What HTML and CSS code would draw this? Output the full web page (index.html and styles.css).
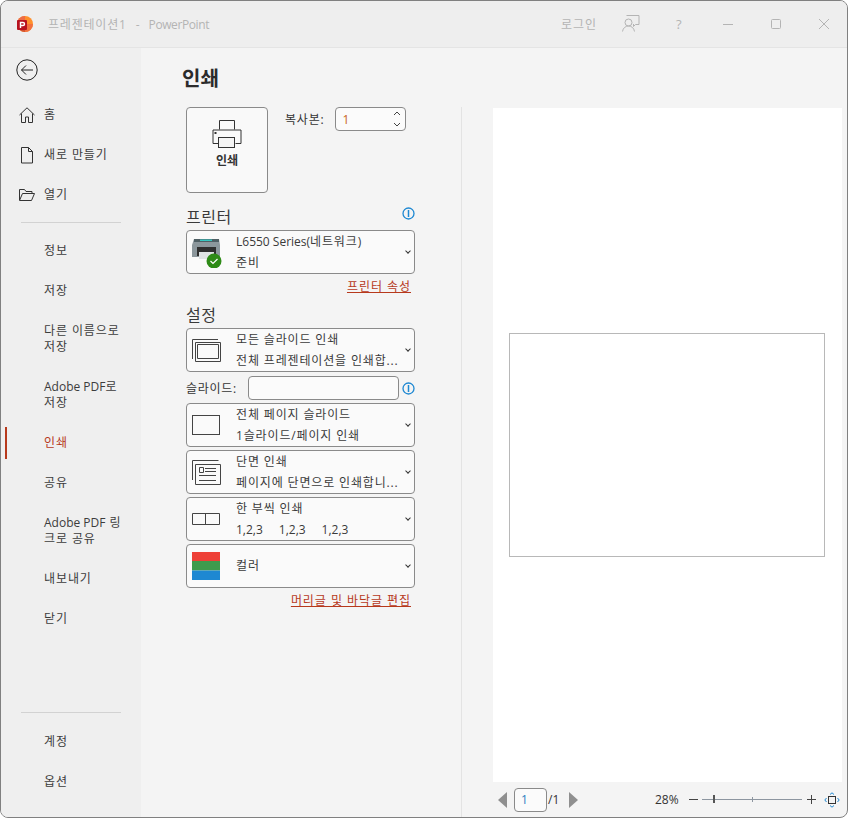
FILE: index.html
```html
<!DOCTYPE html>
<html lang="ko">
<head>
<meta charset="utf-8">
<title>인쇄 - PowerPoint</title>
<link rel="stylesheet" href="styles.css">
</head>
<body>
<div class="window">
  <header class="titlebar">
    <svg class="logo" width="18" height="18" viewBox="0 0 18 18"><circle cx="9" cy="9" r="8" fill="#ff8f2b"/><path d="M9 1a8 8 0 0 0-8 8h8z" fill="#ed6c47"/><path d="M1 9a8 8 0 0 0 8 8V9z" fill="#d35230"/><path d="M9 9h8a8 8 0 0 1-8 8z" fill="#f2703f"/><rect x="1" y="5" width="10" height="10" rx="1" fill="#b7121f"/><path d="M4.500 13V7.500H7a1.500 1.500 0 0 1 0 3H4.500" fill="none" stroke="#fff" stroke-width="1.400"/></svg>
    <span class="doc-title">프레젠테이션1</span><span class="doc-sep">-</span><span class="doc-app">PowerPoint</span>
    <span class="title-spacer"></span>
    <span class="login">로그인</span>
    <svg class="coauth" width="18" height="18" viewBox="0 0 18 18" fill="none" stroke="#b4b4b4"><path d="M4.500 0.500H17V9.500H13.500L11.500 11.500V9"/><circle cx="6.500" cy="7.500" r="3.500" fill="#eeeeee"/><path d="M0.500 16.500C1 13 3.500 11 6.500 11S12 13 12.500 16.500"/></svg>
    <span class="help">?</span>
    <svg class="win-btn" width="46" height="12" viewBox="0 0 46 12" fill="none" stroke="#b4b4b4"><path d="M18 6.500H28"/></svg>
    <svg class="win-btn" width="46" height="12" viewBox="0 0 46 12" fill="none" stroke="#b4b4b4"><rect x="18.500" y="1.500" width="9" height="9" rx="1"/></svg>
    <svg class="win-btn" width="46" height="12" viewBox="0 0 46 12" fill="none" stroke="#b4b4b4"><path d="M18 1L28 11M28 1L18 11"/></svg>
  </header>
  <div class="content">
    <nav class="sidebar">
      <svg class="back" width="22" height="22" viewBox="0 0 22 22" fill="none" stroke="#222"><circle cx="11" cy="11" r="10.200"/><path d="M17 11H5.500M10 6.500L5.500 11L10 15.500"/></svg>
      <ul class="nav-list">
        <li class="nav-item"><svg class="nav-icon" width="16" height="16" viewBox="0 0 16 16" fill="none" stroke="#333"><path d="M0.500 8L8 0.800L15.500 8M2.500 6.500V15.500H6.500V10H9.500V15.500H13.500V6.500"/></svg>홈</li>
        <li class="nav-item"><svg class="nav-icon" width="16" height="17" viewBox="0 0 16 17" fill="none" stroke="#333"><path d="M2.500 0.500H9.500L13.500 4.500V16H2.500ZM9.500 0.500V4.500H13.500"/></svg>새로 만들기</li>
        <li class="nav-item"><svg class="nav-icon" width="16" height="12" viewBox="0 0 16 12" fill="none" stroke="#333"><path d="M0.500 11V0.500H5.500L7 2.500H13V4.500M0.500 11.500H12.500L15.500 4.500H3.500L0.500 11.500"/></svg>열기</li>
      </ul>
      <hr class="nav-rule">
      <ul class="nav-list">
        <li class="nav-item nav-sub">정보</li>
        <li class="nav-item nav-sub">저장</li>
        <li class="nav-item nav-sub nav-tall">다른 이름으로<br>저장</li>
        <li class="nav-item nav-sub nav-tall"><span class="latin">Adobe PDF</span>로<br>저장</li>
        <li class="nav-item nav-sub nav-active">인쇄</li>
        <li class="nav-item nav-sub">공유</li>
        <li class="nav-item nav-sub nav-tall"><span class="latin">Adobe PDF</span> 링<br>크로 공유</li>
        <li class="nav-item nav-sub">내보내기</li>
        <li class="nav-item nav-sub">닫기</li>
      </ul>
      <div class="nav-bottom">
        <hr class="nav-rule">
        <ul class="nav-list">
          <li class="nav-item nav-sub">계정</li>
          <li class="nav-item nav-sub">옵션</li>
        </ul>
      </div>
    </nav>
    <main class="main">
      <h1 class="page-title">인쇄</h1>
      <div class="columns">
        <section class="options">
          <div class="print-row">
            <button class="print-btn">
              <svg width="30" height="28" viewBox="0 0 30 28" fill="none" stroke="#333"><path d="M7.500 9.500V0.500H22.500V9.500"/><path d="M6.500 23.500H1V10H29V23.500H23.500"/><rect x="6.500" y="17.500" width="16" height="10" fill="#f4f4f4"/><rect x="2.500" y="12" width="2" height="2" fill="#333" stroke="none"/></svg>
              <span>인쇄</span>
            </button>
            <label class="copies-label">복사본:</label>
            <div class="spin"><span class="spin-val">1</span>
              <svg width="8" height="20" viewBox="0 0 8 20" fill="none" stroke="#444"><path d="M1 6L4 3L7 6M1 14L4 17L7 14"/></svg>
            </div>
          </div>
          <div class="head-row head-printer">
            <h2 class="section">프린터</h2>
            <svg class="info" width="13" height="13" viewBox="0 0 13 13" fill="none"><circle cx="6.500" cy="6.500" r="5.500" stroke="#1e88d2" stroke-width="1.300"/><path d="M6.500 3V10" stroke="#1e88d2" stroke-width="1.500"/></svg>
          </div>
          <div class="dd">
            <svg class="dd-icon" width="30" height="32" viewBox="0 0 30 32"><path d="M2 3H27L28 9V21H0V9Z" fill="#8c979c"/><rect x="2" y="3" width="25" height="3" fill="#4f5f64"/><rect x="8" y="3.500" width="12" height="1.500" fill="#37c6c0"/><rect x="5" y="11" width="19" height="9" fill="#2f2f2f"/><rect x="7" y="16" width="15" height="7" fill="#dfe3e4"/><circle cx="22" cy="25" r="7.500" fill="#2e8b17"/><path d="M18.500 25L21 27.500L25.500 23" fill="none" stroke="#fff" stroke-width="1.200"/></svg>
            <div class="dd-text"><div class="dd-line"><span class="latin">L6550 Series(</span>네트워크)</div><div class="dd-line">준비</div></div>
            <span class="chev"></span>
          </div>
          <div class="link-row link-printer"><a class="link">프린터 속성</a></div>
          <h2 class="section section-settings">설정</h2>
          <div class="dd">
            <svg class="dd-icon" width="30" height="30" viewBox="0 0 30 30" fill="none" stroke="#444"><path d="M0.500 24V4.500H26M3.500 26.500V7.500H28.500V26.500ZM5.500 9.500H26.500V23.500H5.500Z"/></svg>
            <div class="dd-text"><div class="dd-line">모든 슬라이드 인쇄</div><div class="dd-line">전체 프레젠테이션을 인쇄합...</div></div>
            <span class="chev"></span>
          </div>
          <div class="slides-row">
            <label class="slides-label">슬라이드:</label>
            <input class="slides-input" type="text" aria-label="슬라이드">
            <svg class="info" width="13" height="13" viewBox="0 0 13 13" fill="none"><circle cx="6.500" cy="6.500" r="5.500" stroke="#1e88d2" stroke-width="1.300"/><path d="M6.500 3V10" stroke="#1e88d2" stroke-width="1.500"/></svg>
          </div>
          <div class="dd">
            <svg class="dd-icon" width="30" height="30" viewBox="0 0 30 30" fill="none" stroke="#444"><rect x="0.500" y="5.500" width="27" height="19"/></svg>
            <div class="dd-text"><div class="dd-line">전체 페이지 슬라이드</div><div class="dd-line">1슬라이드/페이지 인쇄</div></div>
            <span class="chev"></span>
          </div>
          <div class="dd dd-gap">
            <svg class="dd-icon" width="30" height="30" viewBox="0 0 30 30" fill="none" stroke="#444"><path d="M0.500 23V3.500H26.500M3.500 27.500V7.500H28.500V27.500ZM7.500 10.500H11.500V15.500H7.500ZM13 11.500H24M13 14.500H24M7 18.500H24M7 23.500H24"/></svg>
            <div class="dd-text"><div class="dd-line">단면 인쇄</div><div class="dd-line">페이지에 단면으로 인쇄합니...</div></div>
            <span class="chev"></span>
          </div>
          <div class="dd dd-gap">
            <svg class="dd-icon" width="30" height="30" viewBox="0 0 30 30" fill="none" stroke="#444"><path d="M0.500 9.500H27.500V20.500H0.500ZM13.500 9.500V20.500"/></svg>
            <div class="dd-text"><div class="dd-line">한 부씩 인쇄</div><div class="dd-line collate"><span>1,2,3</span><span>1,2,3</span><span>1,2,3</span></div></div>
            <span class="chev"></span>
          </div>
          <div class="dd dd-gap">
            <svg class="dd-icon" width="30" height="30" viewBox="0 0 30 30"><rect x="0" y="1" width="28" height="9.500" fill="#ee4037"/><rect x="0" y="10" width="28" height="9.500" fill="#3f9b4d"/><rect x="0" y="19.500" width="28" height="9.500" fill="#1e88d2"/></svg>
            <div class="dd-text dd-single"><div class="dd-line">컬러</div></div>
            <span class="chev"></span>
          </div>
          <div class="link-row link-footer"><a class="link">머리글 및 바닥글 편집</a></div>
        </section>
        <section class="preview">
          <div class="stage"><div class="paper"></div></div>
          <div class="pager">
            <span class="tri tri-left"></span>
            <span class="page-box">1</span><span class="page-total">/1</span>
            <span class="tri tri-right"></span>
            <span class="pct">28%</span>
            <span class="zoom-sign zoom-minus"></span>
            <span class="zoom-track"><span class="zoom-mid"></span><span class="zoom-thumb"></span></span>
            <span class="zoom-sign zoom-plus"></span>
            <svg class="fit" width="16" height="16" viewBox="0 0 16 16" fill="none"><rect x="4.500" y="4.500" width="7" height="7" stroke="#333"/><path d="M6 2.500L8 0.800L10 2.500M6 13.500L8 15.200L10 13.500M2.500 6L0.800 8L2.500 10M13.500 6L15.200 8L13.500 10" stroke="#1e88d2"/></svg>
          </div>
        </section>
      </div>
    </main>
  </div>
</div>
</body>
</html>
```
FILE: styles.css
```css
* { box-sizing: border-box; }
html, body { margin: 0; padding: 0; background: #fff; }
body { width: 848px; height: 818px; overflow: hidden; font-family: "Open Sans", "Noto Sans CJK KR", sans-serif; font-size: 12px; color: #333; }
.window { width: 848px; height: 818px; border: 1px solid #808080; border-radius: 8px; overflow: hidden; display: flex; flex-direction: column; background: #f4f4f4; }
.titlebar { height: 47px; flex: none; display: flex; align-items: center; background: #eeeeee; border-bottom: 1px solid #e4e4e4; padding-left: 15px; color: #b4b4b4; }
.logo { flex: none; margin-right: 14px; }
.doc-title { letter-spacing: .8px; }
.doc-sep { margin: 0 9px; }
.doc-app { letter-spacing: -.4px; }
.title-spacer { flex: 1; }
.login { margin-right: 25px; letter-spacing: 1px; }
.coauth { margin-right: 36px; }
.help { font-size: 13px; margin-right: 17px; width: 10px; }
.win-btn { flex: none; margin-left: 2px; }
.content { flex: 1; display: flex; min-height: 0; }
.sidebar { width: 140px; flex: none; background: #efefef; display: flex; flex-direction: column; position: relative; }
.back { margin: 11px 0 0 15px; flex: none; }
.nav-list { list-style: none; margin: 0; padding: 0; }
.sidebar > .back + .nav-list { margin-top: 14px; }
.nav-item { height: 40px; display: flex; align-items: center; gap: 8px; padding-left: 17px; letter-spacing: .9px; color: #3c3c3c; position: relative; line-height: 16px; }
.latin { letter-spacing: 0; }
.nav-icon { flex: none; width: 18px; }
.nav-sub { padding-left: 43px; display: block; padding-top: 12px; }
.nav-tall { height: 56px; }
.nav-active { color: #b7391c; }
.nav-active::before { content: ""; position: absolute; left: 4px; top: 4px; width: 2px; height: 32px; background: #b7391c; }
.nav-rule { border: 0; height: 1px; background: #d2d2d2; margin: 7px 20px 8px 20px; flex: none; }
.nav-bottom { margin-top: auto; padding-bottom: 15px; }
.nav-bottom .nav-rule { margin-bottom: 9px; }
.main { flex: 1; min-width: 0; display: flex; flex-direction: column; }
.page-title { margin: 0; height: 59px; padding: 16px 0 0 41px; font-size: 20px; line-height: 30px; font-weight: 700; color: #2b2b2b; }
.columns { flex: 1; display: flex; min-height: 0; }
.options { width: 321px; flex: none; border-right: 1px solid #e3e3e3; padding-left: 45px; padding-right: 46px; }
.print-row { display: flex; align-items: flex-start; height: 86px; }
.print-btn { width: 82px; height: 86px; flex: none; border: 1px solid #8a8a8a; border-radius: 4px; background: #f9f9f9; display: flex; flex-direction: column; align-items: center; padding: 12px 0 0; gap: 3px; font: inherit; font-weight: 700; color: #333; }
.copies-label { margin: 3px 11px 0 17px; letter-spacing: .8px; }
.spin { width: 71px; height: 24px; border: 1px solid #8a8a8a; border-radius: 4px; background: #fbfbfb; display: flex; align-items: center; justify-content: space-between; padding: 0 4px 0 6px; color: #c8651e; }
.head-row { display: flex; align-items: center; justify-content: space-between; }
.head-printer { margin-top: 11px; height: 26px; }
.head-printer .info { margin-top: -7px; }
.section { margin: 0; font-size: 16px; line-height: 26px; font-weight: 400; letter-spacing: .5px; color: #3a3a3a; }
.section-settings { margin-top: 8px; line-height: 18px; margin-bottom: 4px; }
.dd { width: 229px; height: 44px; border: 1px solid #8a8a8a; border-radius: 4px; background: #fafafa; display: flex; align-items: center; padding-left: 5px; position: relative; }
.dd-gap { margin-top: 3px; }
.dd-icon { flex: none; margin-right: 14px; width: 30px; }
.dd-text { flex: 1; min-width: 0; letter-spacing: .85px; white-space: nowrap; color: #3a3a3a; }
.dd-single { padding-bottom: 2px; }
.dd-line { line-height: 21px; height: 21px; }
.collate { display: flex; gap: 16px; letter-spacing: 0; }
.chev { width: 4px; height: 4px; border-right: 1px solid #333; border-bottom: 1px solid #333; transform: rotate(45deg); position: absolute; right: 4px; top: 18px; }
.link-row { display: flex; justify-content: flex-end; padding-right: 4px; }
.link-printer { height: 24px; padding-top: 4px; }
.link-footer { height: 24px; padding-top: 4px; }
.link { color: #b7391c; text-decoration: underline; letter-spacing: .95px; line-height: 18px; }
.slides-row { display: flex; align-items: center; height: 24px; margin: 4px 0 3px; position: relative; }
.slides-label { width: 62px; flex: none; letter-spacing: .7px; }
.slides-input { width: 151px; height: 24px; flex: none; border: 1px solid #8a8a8a; border-radius: 4px; background: #fbfbfb; }
.slides-row .info { margin-left: 3px; flex: none; }
.preview { flex: 1; min-width: 0; display: flex; flex-direction: column; padding: 1px 5px 0 31px; }
.stage { flex: 1; min-height: 0; background: #fff; display: flex; align-items: center; justify-content: center; }
.paper { width: 316px; height: 224px; border: 1px solid #b8b8b8; background: #fff; margin-right: 2px; }
.pager { height: 35px; flex: none; display: flex; align-items: center; position: relative; }
.tri { width: 0; height: 0; border-top: 8px solid transparent; border-bottom: 8px solid transparent; flex: none; }
.tri-left { margin-left: 5px; border-right: 9px solid #8f8f8f; }
.tri-right { margin-left: 9px; border-left: 9px solid #8f8f8f; }
.page-box { width: 33px; height: 24px; margin-left: 7px; border: 1px solid #8a8a8a; border-radius: 4px; background: #fbfbfb; color: #2f7fc0; padding-left: 6px; line-height: 22px; flex: none; }
.page-total { width: 12px; margin-left: 1px; flex: none; }
.pct { margin-left: 77px; width: 34px; flex: none; }
.zoom-sign { width: 9px; height: 9px; flex: none; position: relative; background: linear-gradient(#444,#444) center/9px 1px no-repeat; }
.zoom-plus { background: linear-gradient(#444,#444) center/9px 1px no-repeat, linear-gradient(#444,#444) center/1px 9px no-repeat; margin-left: 5px; }
.zoom-track { width: 100px; height: 1px; margin-left: 4px; background: #8d96a0; position: relative; flex: none; }
.zoom-mid { position: absolute; left: 50px; top: -2px; width: 1px; height: 5px; background: #8d96a0; }
.zoom-thumb { position: absolute; left: 11px; top: -4px; width: 2px; height: 8px; background: #555; }
.fit { flex: none; margin-left: 8px; }
```
